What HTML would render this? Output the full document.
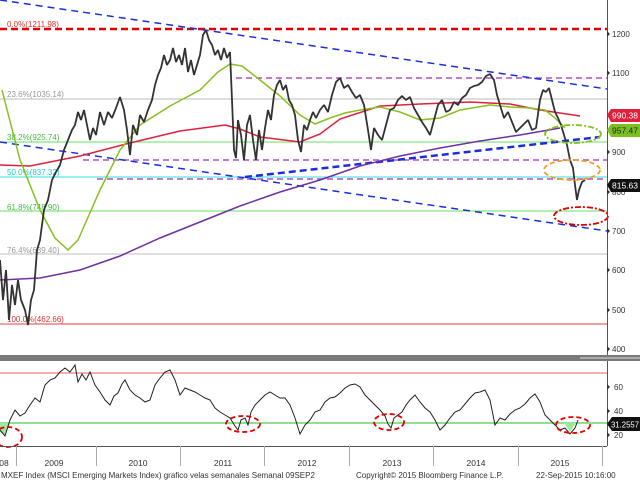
<!DOCTYPE html>
<html><head><meta charset="utf-8"><style>
html,body{margin:0;padding:0;background:#fff;}
svg{display:block;font-family:"Liberation Sans",sans-serif;}
</style></head><body>
<svg width="640" height="480" viewBox="0 0 640 480" xmlns="http://www.w3.org/2000/svg">
<rect width="640" height="480" fill="#fff"/>
<line x1="0" y1="29" x2="607" y2="29" stroke="#e00000" stroke-width="2.5" stroke-dasharray="7,4"/>
<line x1="0" y1="99" x2="607" y2="99" stroke="#bbb" stroke-width="1"/>
<line x1="0" y1="142" x2="607" y2="142" stroke="#66e066" stroke-width="1"/>
<line x1="0" y1="177" x2="607" y2="177" stroke="#33dddd" stroke-width="1"/>
<line x1="0" y1="211" x2="607" y2="211" stroke="#66e066" stroke-width="1"/>
<line x1="0" y1="254" x2="607" y2="254" stroke="#ccc" stroke-width="1.2"/>
<line x1="0" y1="324" x2="607" y2="324" stroke="#e04040" stroke-width="1"/>
<line x1="236" y1="78" x2="607" y2="78" stroke="#b050c0" stroke-width="1.5" stroke-dasharray="6,4"/>
<line x1="83" y1="160" x2="607" y2="160" stroke="#b050c0" stroke-width="1.5" stroke-dasharray="6,4"/>
<line x1="97" y1="179" x2="607" y2="179" stroke="#b050c0" stroke-width="1.5" stroke-dasharray="6,4"/>
<line x1="0" y1="0" x2="607" y2="89" stroke="#1a2ee0" stroke-width="1.5" stroke-dasharray="7,5"/>
<line x1="0" y1="142" x2="607" y2="231" stroke="#1a2ee0" stroke-width="1.5" stroke-dasharray="7,5"/>
<line x1="245" y1="177" x2="600" y2="137" stroke="#1a2ee0" stroke-width="2.5" stroke-dasharray="7,4"/>
<g font-size="8">
<text x="7" y="27" fill="#e03030">0.0%(1211.98)</text>
<text x="7" y="97" fill="#999">23.6%(1035.14)</text>
<text x="7" y="140" fill="#44bb44">38.2%(925.74)</text>
<text x="7" y="175" fill="#22cccc">50.0%(837.32)</text>
<text x="7" y="210" fill="#44bb44">61.8%(748.90)</text>
<text x="7" y="253" fill="#999">76.4%(639.40)</text>
<text x="7" y="322" fill="#e03030">100.0%(462.66)</text>
</g>
<polyline fill="none" stroke="#7030a0" stroke-width="1.5" points="0,280 40,278 80,270 120,256 160,238 200,222 240,206 280,192 320,180 360,166 400,156 440,148 480,141 520,135 560,128"/>
<polyline fill="none" stroke="#e0203a" stroke-width="1.5" points="0,165 30,166 80,156 130,143 180,131 225,125 240,129 260,137 300,142 320,134 340,119 380,106 420,104 470,102 510,104 540,110 580,116"/>
<polyline fill="none" stroke="#88c020" stroke-width="1.5" points="2,90 20,160 40,210 55,238 68,250 78,240 100,190 120,150 140,125 170,106 200,90 218,72 230,64 242,66 260,80 280,96 300,115 315,124 330,118 345,113 360,110 380,107 400,112 420,120 440,118 460,110 490,105 510,107 530,108 545,110 555,118 565,128"/>
<polyline fill="none" stroke="#333" stroke-width="1.8" stroke-linejoin="bevel" points="0,260 3,300 6,270 9,320 12,285 15,305 18,280 21,300 25,310 28,325 31,300 34,290 37,250 40,240 44,210 48,200 52,180 56,172 60,165 64,150 68,140 72,130 75,125 78,112 81,120 84,110 87,125 90,140 93,128 96,135 100,112 104,125 108,112 112,118 116,108 120,97 124,110 127,130 130,155 133,125 137,135 140,115 144,122 148,110 152,100 155,85 158,75 161,68 164,55 167,65 170,60 173,48 176,62 179,55 182,65 185,48 188,72 191,60 194,75 197,65 200,55 203,35 206,30 209,40 212,45 215,55 218,50 221,60 224,48 227,58 230,52 232,100 234,150 236,158 238,120 241,135 244,160 247,125 250,115 253,140 256,160 259,130 262,150 265,128 268,110 271,120 274,95 277,85 280,80 283,90 286,85 289,100 292,105 295,115 298,140 301,152 304,125 307,130 310,120 313,112 316,118 320,110 324,105 328,112 332,95 336,82 340,78 344,88 348,85 352,92 356,98 360,95 364,105 368,130 371,150 374,128 378,135 382,140 386,125 390,110 394,108 398,100 402,96 406,100 410,97 414,108 418,115 422,122 426,128 430,135 434,120 438,105 442,100 446,112 450,110 454,102 458,105 462,98 466,95 470,88 474,86 478,85 482,82 486,76 490,74 494,80 497,95 500,105 504,118 508,112 512,122 516,132 520,128 524,124 528,120 532,130 536,128 540,100 543,90 546,92 549,88 552,100 555,112 558,118 561,125 564,135 567,145 570,160 573,168 575,185 577,200 579,190 582,182 585,180"/>
<ellipse cx="573" cy="134" rx="28" ry="9" fill="none" stroke="#88c020" stroke-width="1.8" stroke-dasharray="6,2,2,2"/>
<ellipse cx="572" cy="170" rx="28" ry="10" fill="none" stroke="#f0a020" stroke-width="1.8" stroke-dasharray="5,3"/>
<ellipse cx="581" cy="216" rx="27" ry="9" fill="none" stroke="#e00000" stroke-width="1.8" stroke-dasharray="6,2,2,2"/>
<line x1="607.5" y1="0" x2="607.5" y2="446" stroke="#555" stroke-width="1"/>
<g font-size="8" fill="#333">
<text x="612" y="37">1200</text>
<text x="612" y="76">1100</text>
<text x="612" y="155">900</text>
<text x="612" y="195">800</text>
<text x="612" y="234">700</text>
<text x="612" y="273">600</text>
<text x="612" y="313">500</text>
<text x="612" y="352">400</text>
<text x="614" y="390">60</text>
<text x="614" y="414">40</text>
<text x="614" y="438">20</text>
</g>
<g fill="#333">
<path d="M607,31 l3,3 l-3,3z"/><path d="M607,70 l3,3 l-3,3z"/><path d="M607,149 l3,3 l-3,3z"/><path d="M607,189 l3,3 l-3,3z"/><path d="M607,228 l3,3 l-3,3z"/><path d="M607,267 l3,3 l-3,3z"/><path d="M607,307 l3,3 l-3,3z"/><path d="M607,346 l3,3 l-3,3z"/><path d="M607,384 l3,3 l-3,3z"/><path d="M607,408 l3,3 l-3,3z"/><path d="M607,432 l3,3 l-3,3z"/>
</g>
<path d="M607,115 l4,-6 h29 v13 h-29z" fill="#e0203a"/>
<text x="612" y="118.5" font-size="8" fill="#fff" textLength="26" lengthAdjust="spacingAndGlyphs">990.38</text>
<path d="M607,130 l4,-6 h29 v13 h-29z" fill="#7cc020"/>
<text x="612" y="133.5" font-size="8" fill="#222" textLength="26" lengthAdjust="spacingAndGlyphs">957.47</text>
<path d="M607,185 l4,-6 h29 v13 h-29z" fill="#111"/>
<text x="612" y="188.5" font-size="8" fill="#fff" textLength="26" lengthAdjust="spacingAndGlyphs">815.63</text>
<rect x="0" y="355" width="640" height="6" fill="#7a7a7a"/>
<line x1="580" y1="358" x2="640" y2="358" stroke="#ddd" stroke-width="1"/>
<line x1="0" y1="373" x2="607" y2="373" stroke="#e06060" stroke-width="1"/>
<line x1="0" y1="423" x2="607" y2="423" stroke="#90e090" stroke-width="2"/>
<polygon points="0,423 0,432 5,436 10,423" fill="#a0e8a0"/>
<polygon points="564,423 570,432 576,423" fill="#a0e8a0"/>
<polyline fill="none" stroke="#222" stroke-width="1" points="0,430 5,436 10,420 15,410 20,416 25,413 30,405 35,398 40,402 45,385 50,380 55,378 60,372 65,368 70,372 75,365 78,382 82,374 86,380 90,372 95,385 100,392 105,400 110,405 114,396 118,393 122,384 125,380 130,390 135,395 140,398 145,402 150,400 155,385 160,378 165,372 170,370 175,380 180,395 185,388 190,390 195,392 200,395 205,398 210,400 215,408 220,412 225,415 230,418 235,426 238,430 241,420 245,418 248,425 251,412 255,405 260,400 265,395 270,392 275,395 280,398 285,398 290,405 295,418 300,434 305,425 310,420 315,412 320,410 325,402 330,398 335,397 340,393 345,388 350,385 355,384 360,387 365,395 370,400 375,405 380,410 385,416 388,424 391,428 394,418 398,415 402,412 406,405 410,400 415,395 420,402 425,408 430,412 435,420 440,430 445,425 450,418 455,412 460,410 465,404 470,398 475,393 480,392 485,390 490,400 495,425 500,418 505,420 510,414 515,410 520,408 525,404 530,398 535,394 540,402 545,415 550,420 555,425 560,430 565,428 570,434 575,428 578,420"/>
<ellipse cx="8" cy="437" rx="14" ry="10" fill="none" stroke="#e00000" stroke-width="1.8" stroke-dasharray="5,3"/>
<ellipse cx="243" cy="424" rx="17" ry="8" fill="none" stroke="#e00000" stroke-width="1.8" stroke-dasharray="5,3"/>
<ellipse cx="389" cy="422" rx="15" ry="8" fill="none" stroke="#e00000" stroke-width="1.8" stroke-dasharray="5,3"/>
<ellipse cx="573" cy="425" rx="17" ry="8" fill="none" stroke="#e00000" stroke-width="1.8" stroke-dasharray="5,3"/>
<path d="M607,424 l5,-7 h28 v14 h-28z" fill="#111"/>
<text x="611" y="427.5" font-size="8" fill="#fff" textLength="28" lengthAdjust="spacingAndGlyphs">31.2557</text>
<line x1="0" y1="446.5" x2="607" y2="446.5" stroke="#555" stroke-width="1"/>
<g stroke="#aaa" stroke-width="1">
<line x1="16.5" y1="446" x2="16.5" y2="466"/><line x1="96.5" y1="446" x2="96.5" y2="466"/><line x1="180.5" y1="446" x2="180.5" y2="466"/><line x1="264.5" y1="446" x2="264.5" y2="466"/><line x1="349.5" y1="446" x2="349.5" y2="466"/><line x1="433.5" y1="446" x2="433.5" y2="466"/><line x1="518.5" y1="446" x2="518.5" y2="466"/><line x1="602.5" y1="446" x2="602.5" y2="466"/>
</g>
<g font-size="8.5" fill="#333" text-anchor="middle">
<text x="4" y="466">08</text>
<text x="54" y="466">2009</text>
<text x="138" y="466">2010</text>
<text x="223" y="466">2011</text>
<text x="307" y="466">2012</text>
<text x="392" y="466">2013</text>
<text x="476" y="466">2014</text>
<text x="560" y="466">2015</text>
</g>
<g font-size="8" fill="#333">
<text x="1" y="478">MXEF Index (MSCI Emerging Markets Index) grafico velas semanales  Semanal 09SEP2</text>
<text x="356" y="478">Copyright© 2015 Bloomberg Finance L.P.</text>
<text x="536" y="478">22-Sep-2015 10:16:00</text>
</g>
</svg>
</body></html>
